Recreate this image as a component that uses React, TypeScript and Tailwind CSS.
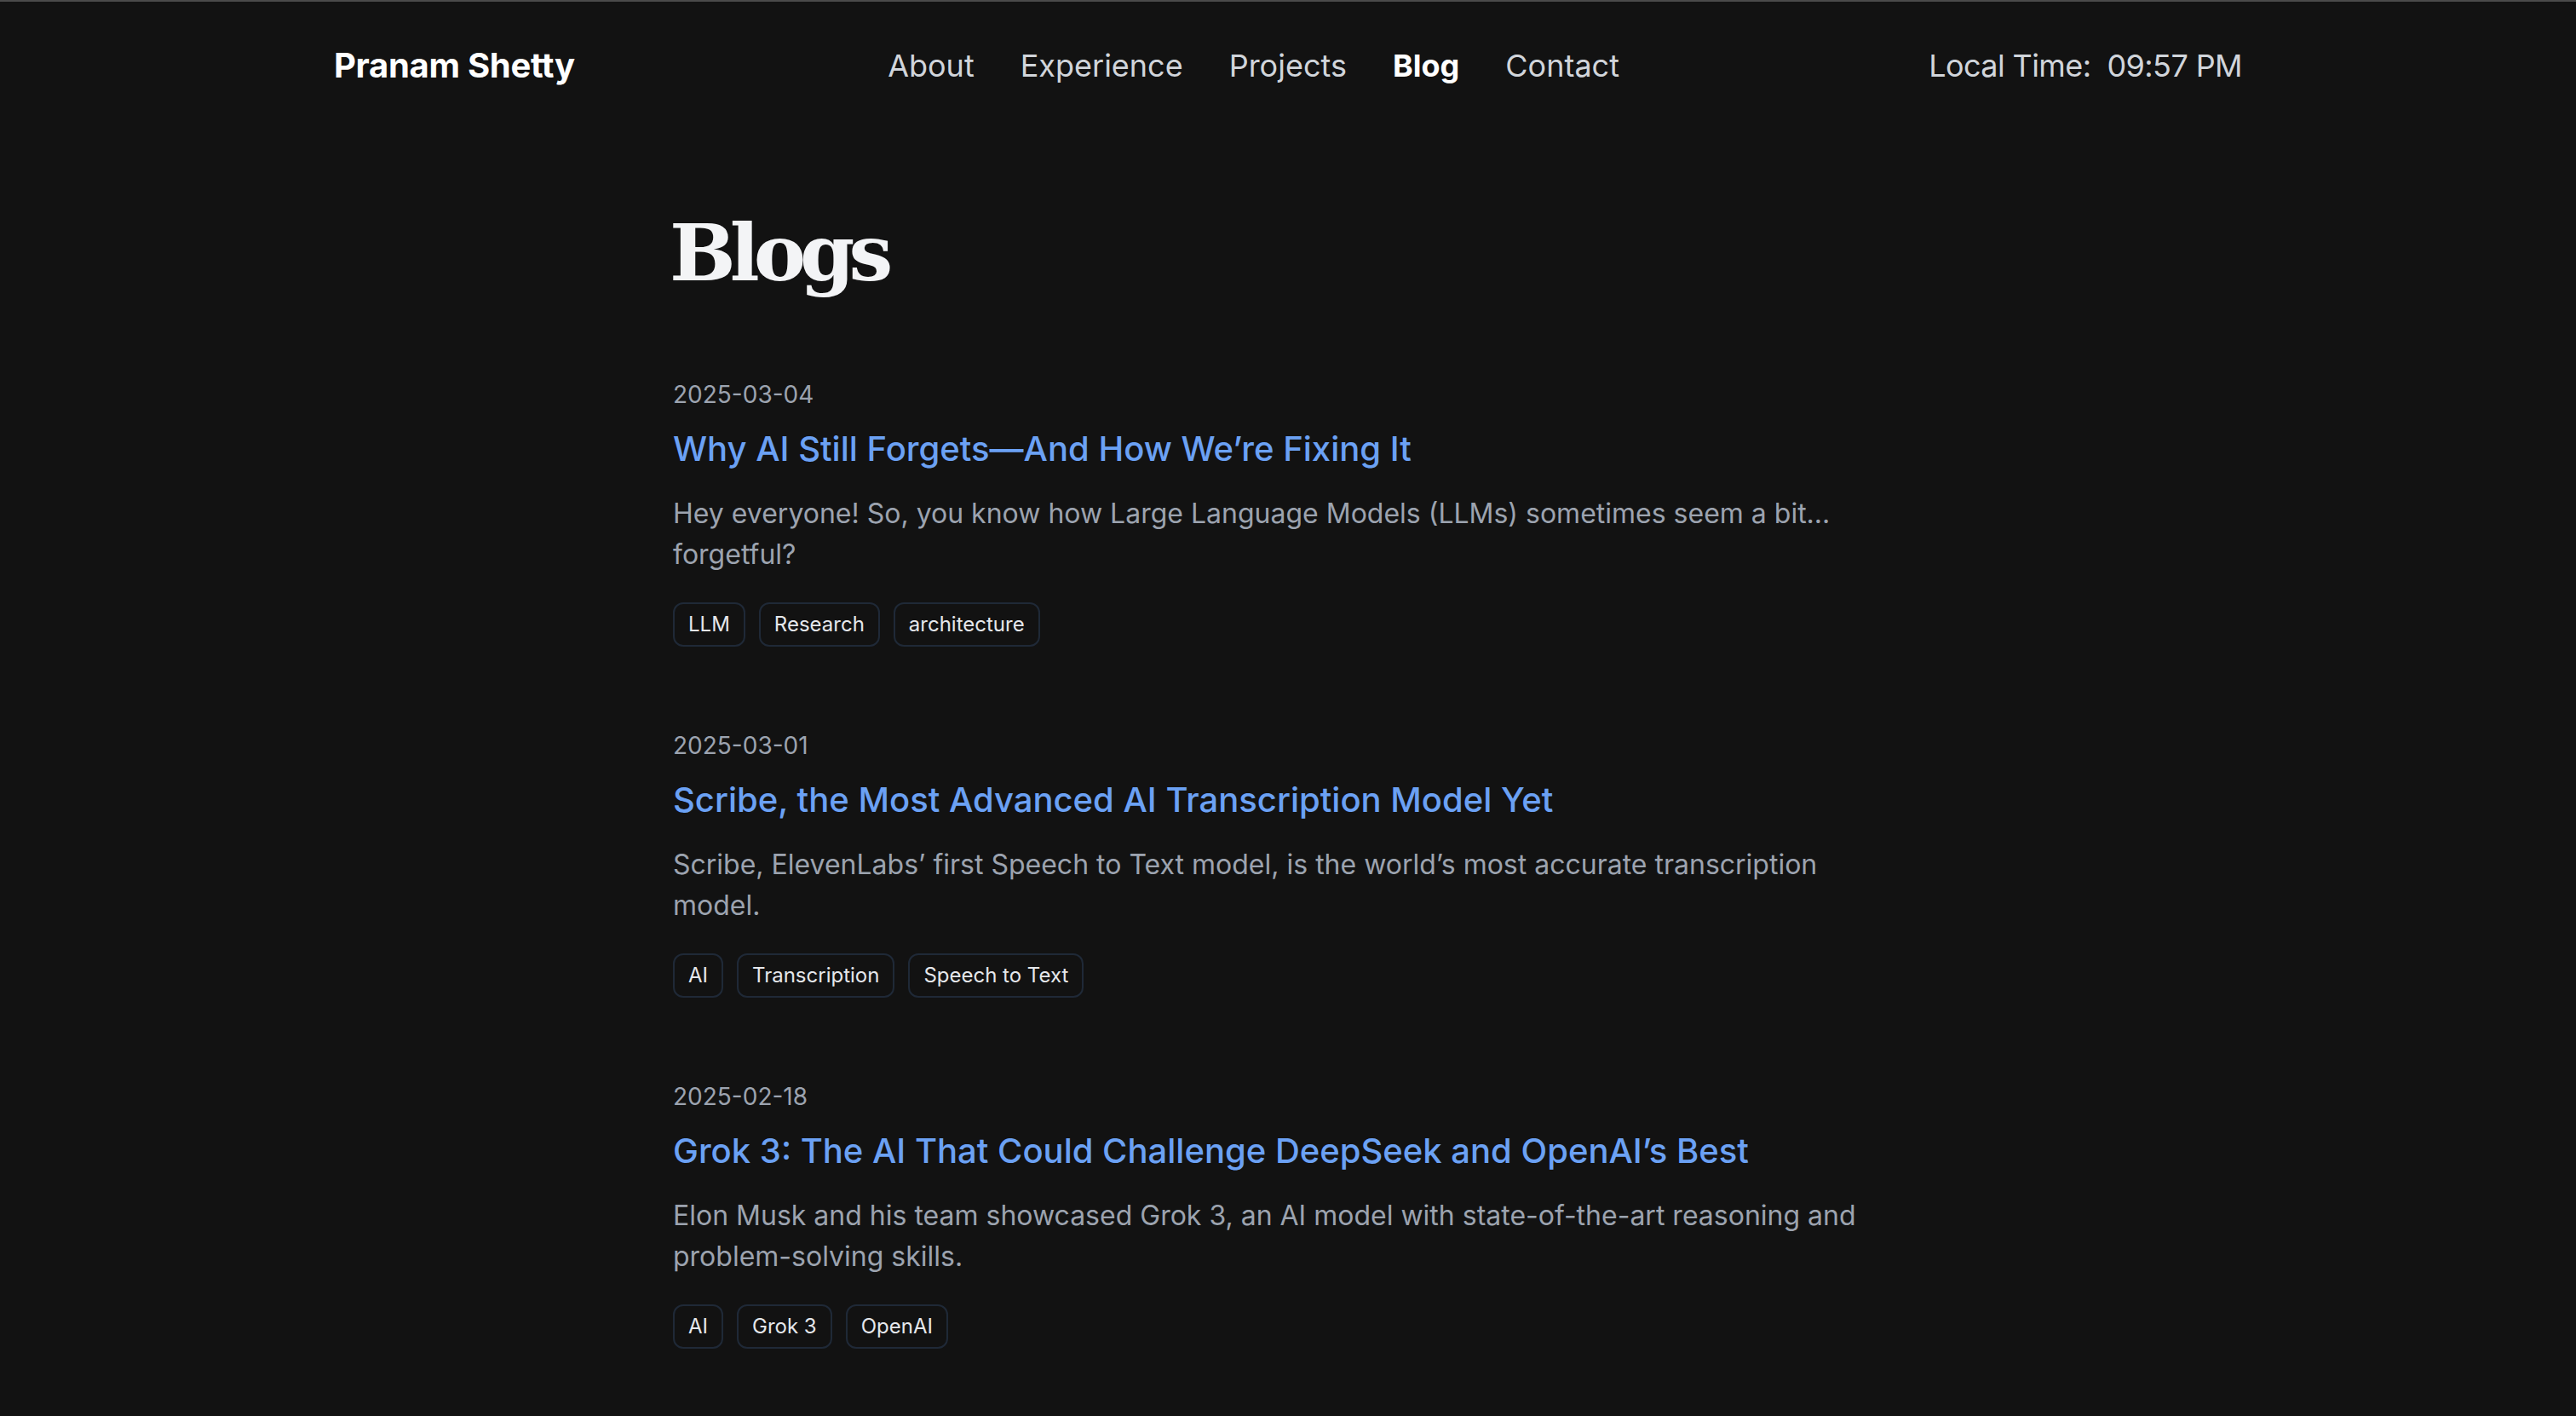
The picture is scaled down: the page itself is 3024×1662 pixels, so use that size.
const posts = [
  {
    date: '2025-03-04',
    title: 'Why AI Still Forgets—And How We’re Fixing It',
    excerpt:
      'Hey everyone! So, you know how Large Language Models (LLMs) sometimes seem a bit... forgetful?',
    tags: ['LLM', 'Research', 'architecture'],
  },
  {
    date: '2025-03-01',
    title: 'Scribe, the Most Advanced AI Transcription Model Yet',
    excerpt:
      'Scribe, ElevenLabs’ first Speech to Text model, is the world’s most accurate transcription model.',
    tags: ['AI', 'Transcription', 'Speech to Text'],
  },
  {
    date: '2025-02-18',
    title: 'Grok 3: The AI That Could Challenge DeepSeek and OpenAI’s Best',
    excerpt:
      'Elon Musk and his team showcased Grok 3, an AI model with state-of-the-art reasoning and problem-solving skills.',
    tags: ['AI', 'Grok 3', 'OpenAI'],
  },
]

const navLinks = ['About', 'Experience', 'Projects', 'Blog', 'Contact']

export default function App() {
  return (
    <div className="min-h-screen bg-[#121212] font-['Inter',sans-serif]">
      <div className="h-[2px] bg-[#4a4a4a]" />

      {/* Header */}
      <header className="max-w-[2240px] mx-auto pt-[47px] flex items-center justify-between">
        <a className="text-[40px] leading-[56px] font-bold text-white tracking-[-0.3px]">
          Pranam Shetty
        </a>
        <nav className="flex items-center gap-[54px] text-[36px] leading-[56px] ml-[4px]">
          {navLinks.map((link) => (
            <a
              key={link}
              className={link === 'Blog' ? 'text-white font-bold' : 'text-[#d1d5db]'}
            >
              {link}
            </a>
          ))}
        </nav>
        <div className="text-[36px] leading-[56px] text-[#d1d5db] tracking-[-0.6px]">
          Local Time:&nbsp; 09:57 PM
        </div>
      </header>

      {/* Blog list */}
      <main className="max-w-[1444px] mx-auto pt-[146px] pb-[96px]">
        <h1 className="text-[92px] leading-none font-bold text-[#f3f4f6] font-['DejaVu_Serif',serif] tracking-[-7px] -ml-[4px] mb-[98px]">
          Blogs
        </h1>

        <div className="flex flex-col gap-[94px]">
          {posts.map((post) => (
            <article key={post.date}>
              <p className="text-[28px] leading-[40px] text-[#9ca3af] mb-[16px] mt-[2px]">{post.date}</p>
              <h2 className="text-[40px] leading-[56px] font-medium text-[#6ba1f4] mb-[24px]">
                {post.title}
              </h2>
              <p className="text-[32px] leading-[48px] text-[#9ca3af] mb-[32px]">
                {post.excerpt}
              </p>
              <div className="flex flex-wrap gap-[16px]">
                {post.tags.map((tag) => (
                  <span
                    key={tag}
                    className="px-[16px] py-[8px] text-[24px] leading-[32px] text-[#e5e7eb] border-2 border-[#1f2937] rounded-[12px]"
                  >
                    {tag}
                  </span>
                ))}
              </div>
            </article>
          ))}
        </div>
      </main>
    </div>
  )
}
